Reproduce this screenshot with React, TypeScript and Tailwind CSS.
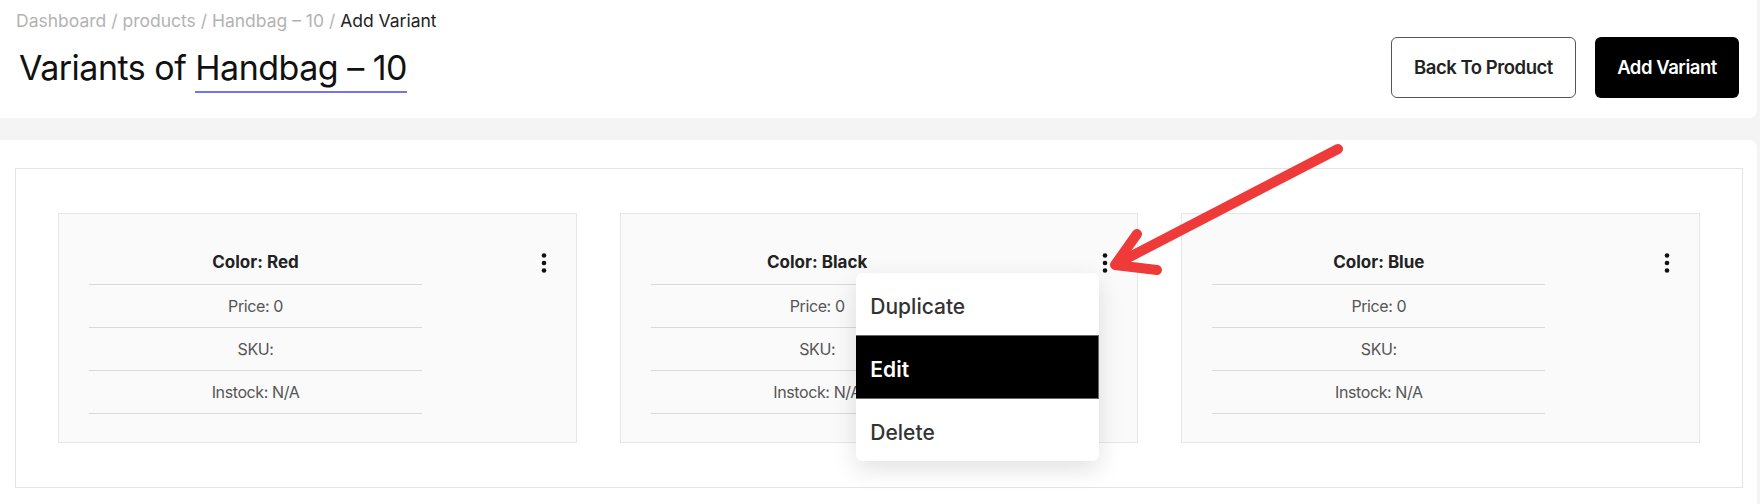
import { useState } from 'react';

const VARIANTS = [
  { id: 1, color: 'Red', price: 0, sku: '', instock: 'N/A' },
  { id: 2, color: 'Black', price: 0, sku: '', instock: 'N/A' },
  { id: 3, color: 'Blue', price: 0, sku: '', instock: 'N/A' },
];

const MENU_ITEMS = ['Duplicate', 'Edit', 'Delete'];

function Kebab() {
  return (
    <svg width="6" height="20" viewBox="0 0 6 20" fill="#111">
      <circle cx="3" cy="2.5" r="2.3" />
      <circle cx="3" cy="10" r="2.3" />
      <circle cx="3" cy="17.5" r="2.3" />
    </svg>
  );
}

function VariantCard({ v, open, onToggle }: { v: typeof VARIANTS[number]; open: boolean; onToggle: () => void }) {
  return (
    <div className="relative flex justify-between items-start border border-[#e6e6e6] bg-[#fafafa] pl-[30px] pr-[22px] py-7">
      <div className="w-[333px] text-center text-[16px]">
        <div className="h-[43px] flex items-center justify-center border-b border-[#d9d9d9] text-[17px] font-bold text-[#222]">
          Color: {v.color}
        </div>
        <div className="h-[43px] flex items-center justify-center border-b border-[#d9d9d9] text-[#555] tracking-tight">
          Price: {v.price}
        </div>
        <div className="h-[43px] flex items-center justify-center border-b border-[#d9d9d9] text-[#555] tracking-tight">
          SKU: {v.sku}
        </div>
        <div className="h-[43px] flex items-center justify-center border-b border-[#d9d9d9] text-[#555] tracking-tight">
          Instock: {v.instock}
        </div>
      </div>
      <button onClick={onToggle} className="h-[42px] w-5 flex items-center justify-center">
        <Kebab />
      </button>

      {open && (
        <div className="absolute top-[59px] right-[38px] w-[243px] bg-white rounded-md shadow-[0_8px_24px_rgba(0,0,0,0.12)] overflow-hidden z-10">
          {MENU_ITEMS.map(item =>
            item === 'Edit' ? (
              <div key={item} className="h-[64px] flex items-center px-[14px] pt-[5px] bg-black border-y border-r border-[#666] text-white text-[21px] font-semibold">
                {item}
              </div>
            ) : (
              <div key={item} className="h-[62px] flex items-center px-[14px] pt-[6px] text-[#333] text-[21px] font-medium">
                {item}
              </div>
            )
          )}
        </div>
      )}
    </div>
  );
}

export default function App() {
  const [openId, setOpenId] = useState<number | null>(2);

  return (
    <div className="relative min-h-screen flex flex-col bg-[#f4f4f4] font-['Inter','Liberation_Sans',sans-serif]">
      <header className="h-[118px] bg-white mr-[3px] rounded-br-lg flex justify-between items-start pl-4 pr-[18px]">
        <div className="pt-[9px]">
          <div className="text-[17.5px] leading-6 text-[#b3b3b3]">
            Dashboard / products / Handbag – 10 / <span className="text-[#222]">Add Variant</span>
          </div>
          <h1 className="mt-[14px] ml-[3px] text-[34px] leading-[42px] text-[#111] tracking-[-0.015em]">
            Variants of <span className="inline-block border-b-2 border-[#7276ec] leading-[42px] pb-[2px]">Handbag – 10</span>
          </h1>
        </div>
        <div className="flex gap-[19px] pt-[37px]">
          <button className="h-[61px] w-[185px] rounded-md border border-[#555] bg-white text-[18.5px] font-semibold text-[#222] tracking-tight">
            Back To Product
          </button>
          <button className="h-[61px] w-[144px] rounded-md bg-black text-[18.5px] font-semibold text-white tracking-tight">
            Add Variant
          </button>
        </div>
      </header>

      <main className="flex-1 mt-[22px] mr-[3px] bg-white rounded-tr-lg pt-7 pl-[15px] pr-[14px] pb-8">
        <div className="border border-[#e4e4e4] grid grid-cols-3 gap-[43px] px-[42px] py-11">
          {VARIANTS.map(v => (
            <VariantCard
              key={v.id}
              v={v}
              open={openId === v.id}
              onToggle={() => setOpenId(openId === v.id ? null : v.id)}
            />
          ))}
        </div>
      </main>

      {/* annotation arrow pointing at the open menu */}
      <svg className="absolute left-0 top-0 pointer-events-none" width="1760" height="504">
        <g stroke="#ef3a3a" strokeWidth="10" strokeLinecap="round" strokeLinejoin="round" fill="none">
          <path d="M1338 149 L1118 263" />
          <path d="M1137 234 L1115 265 L1157 270" />
        </g>
      </svg>
    </div>
  );
}
